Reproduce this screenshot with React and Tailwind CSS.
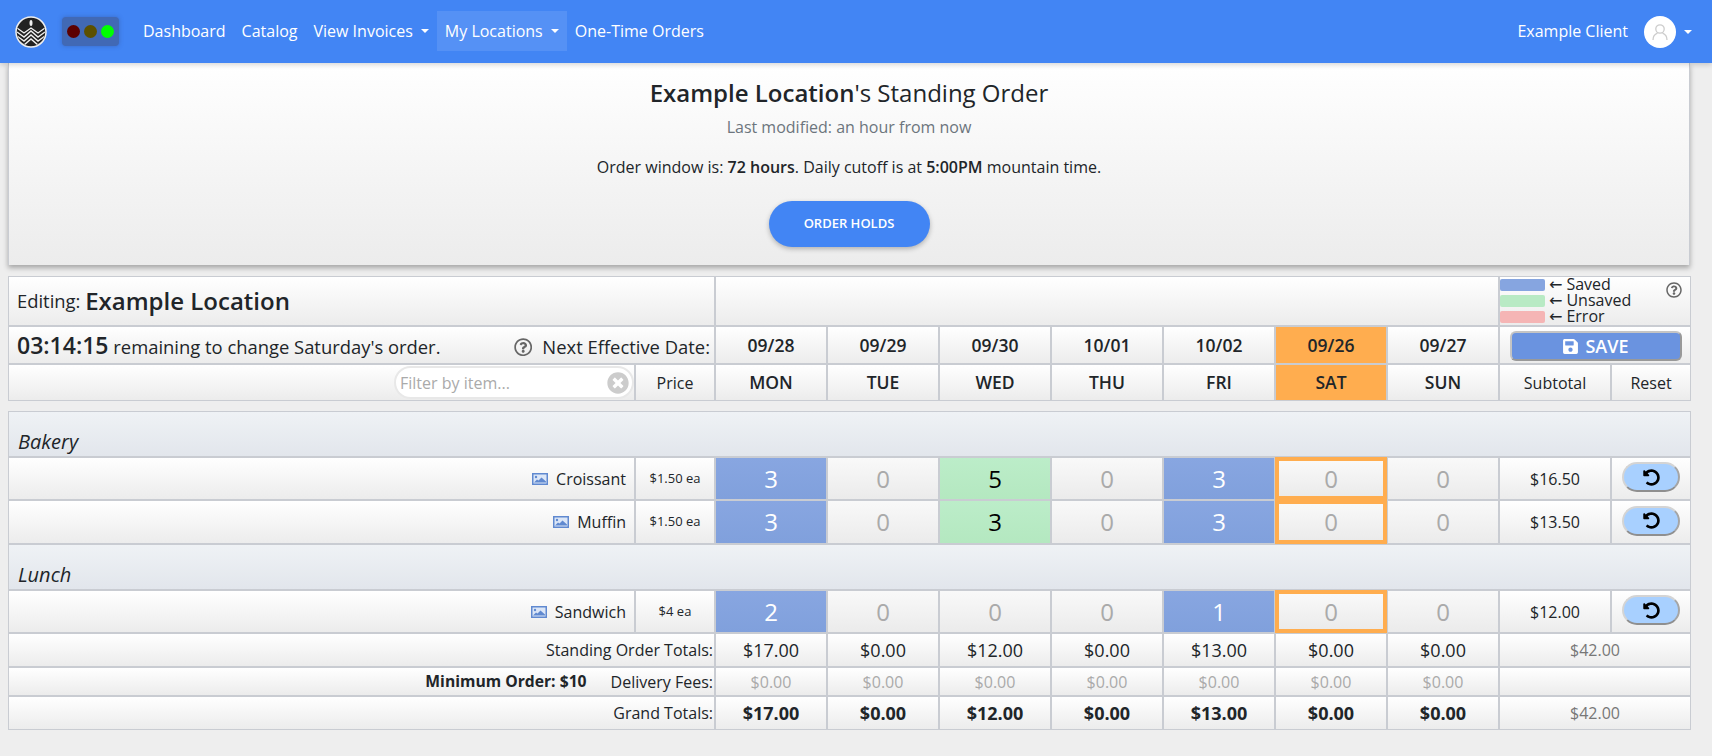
import React from 'react';
import { FaRegQuestionCircle, FaSave, FaTimesCircle, FaUndoAlt } from 'react-icons/fa';

const cols = 'grid-cols-[625px_78px_repeat(7,110px)_110px_78px]';
const cell = 'flex items-center justify-center bg-gradient-to-b from-white to-[#ececec]';

const dates = ['09/28', '09/29', '09/30', '10/01', '10/02', '09/26', '09/27'];
const days = ['MON', 'TUE', 'WED', 'THU', 'FRI', 'SAT', 'SUN'];

const Caret = () => (
  <span className="ml-[8px] inline-block h-0 w-0 border-x-[4px] border-t-[4px] border-x-transparent border-t-white"></span>
);

const Logo = () => (
  <svg width="32" height="32" viewBox="0 0 32 32">
    <clipPath id="logo-clip">
      <circle cx="16" cy="16" r="14" />
    </clipPath>
    <circle cx="16" cy="16" r="15" fill="#222222" stroke="#eeeeee" strokeWidth="1.5" />
    <ellipse cx="16" cy="7" rx="1.5" ry="3" fill="#eeeeee" />
    <g fill="none" stroke="#eeeeee" strokeWidth="1.4" clipPath="url(#logo-clip)">
      <path d="M2 12l7 5 7-5 7 5 7-5" />
      <path d="M2 16l7 5 7-6 7 6 7-5" />
      <path d="M2 20l7 5 7-6 7 6 7-5" />
      <path d="M2 24l7 5 7-6 7 6 7-5" />
    </g>
  </svg>
);

const UserIcon = () => (
  <svg width="18" height="18" viewBox="0 0 18 18" fill="none" stroke="#cccccc" strokeWidth="1.3">
    <circle cx="9" cy="6" r="4.2" />
    <path d="M2 17c0-4 2.5-6 4.5-6.8M16 17c0-4-2.5-6-4.5-6.8" />
  </svg>
);

const ImageIcon = () => (
  <svg width="16" height="12" viewBox="0 0 16 12" className="mr-[8px]">
    <rect x="0.75" y="0.75" width="14.5" height="10.5" fill="#dbe6f7" stroke="#6089d0" strokeWidth="1.5" />
    <circle cx="4" cy="4" r="1.2" fill="#6089d0" />
    <path d="M2 9.5l3-3 1.5 1 3-3 4.5 4v1z" fill="#6089d0" />
  </svg>
);

function QtyCell({ value, kind, selected }) {
  let tone = 'bg-gradient-to-b from-[#f9f9f9] to-[#ebebeb] text-[#aaaaaa]';
  if (kind === 'saved') tone = 'bg-gradient-to-b from-[#88a6e1] to-[#80a0dc] text-white';
  if (kind === 'unsaved') tone = 'bg-gradient-to-b from-[#bcedc9] to-[#b4e8c0] text-black';
  const mark = selected ? 'border-[3px] border-[#ffad4f] outline-1 outline-[#ffad4f] relative' : '';
  return (
    <div className={`flex items-center justify-center text-[24px] ${tone} ${mark}`}>{value}</div>
  );
}

function ItemRow({ name, price, qty, subtotal }) {
  return (
    <>
      <div className={`${cell} !justify-end pr-[8px] text-[16px]`}>
        <ImageIcon />
        {name}
      </div>
      <div className={`${cell} text-[13px]`}>{price}</div>
      {qty.map((q, i) => (
        <QtyCell
          key={i}
          value={q}
          selected={i === 5}
          kind={q === 0 ? 'empty' : i === 2 ? 'unsaved' : 'saved'}
        />
      ))}
      <div className={`${cell} text-[16px]`}>{subtotal}</div>
      <div className={cell}>
        <button className="mb-[3px] flex h-[30px] w-[58px] items-center justify-center rounded-full border-2 border-[#d4d4d4] border-b-[#8f8f8f] border-r-[#a5a5a5] bg-[#a8d0ff] text-[17px] text-black">
          <FaUndoAlt />
        </button>
      </div>
    </>
  );
}

function TotalsRow({ label, values, total, extra, valueClass, totalValue = true }) {
  return (
    <>
      <div className={`${cell} col-span-2 !justify-end pr-[1px] text-[16px]`}>
        {extra && <b className="mr-[24px] text-[15.7px] font-bold">{extra}</b>}
        {label}
      </div>
      {values.map((v, i) => (
        <div key={i} className={`${cell} ${valueClass}`}>{v}</div>
      ))}
      <div className={`${cell} col-span-2 text-[16px] text-[#777777]`}>{totalValue ? total : ''}</div>
    </>
  );
}

export default function App() {
  return (
    <div className="min-h-screen bg-[#eeeeee] text-[#212529] [font-family:'Open_Sans',sans-serif]">
      <nav className="relative z-10 flex h-[63px] items-center bg-[#4285f4] text-[16px] text-white shadow-[0_2px_5px_rgba(0,0,0,0.16)]">
        <div className="ml-[15px]"><Logo /></div>
        <div className="ml-[15px] flex h-[29px] w-[57px] items-center justify-center gap-[4px] rounded-[4px] bg-[#4169b5] shadow-[0_0_4px_rgba(50,80,150,0.5)]">
          <span className="h-[13px] w-[13px] rounded-full bg-[#5c0000]"></span>
          <span className="h-[13px] w-[13px] rounded-full bg-[#5c5000]"></span>
          <span className="h-[13px] w-[13px] rounded-full bg-[#00ff00]"></span>
        </div>
        <div className="mb-[1px] ml-[16px] flex items-center">
          <a className="flex h-[40px] items-center px-[8px]">Dashboard</a>
          <a className="flex h-[40px] items-center px-[8px]">Catalog</a>
          <a className="flex h-[40px] items-center px-[8px]">View Invoices<Caret /></a>
          <a className="flex h-[40px] items-center bg-white/10 px-[8px]">My Locations<Caret /></a>
          <a className="flex h-[40px] items-center px-[8px]">One-Time Orders</a>
        </div>
        <div className="ml-auto mr-[20px] flex items-center">
          <span className="mb-[1px]">Example Client</span>
          <span className="ml-[16px] flex h-[32px] w-[32px] items-center justify-center rounded-full bg-white">
            <UserIcon />
          </span>
          <Caret />
        </div>
      </nav>

      <section className="mx-[8px] flex h-[202px] w-[1682px] flex-col items-center border-x border-[#c9ccd2] bg-gradient-to-b from-white to-[#ececec] shadow-[0_3px_5px_rgba(0,0,0,0.3)]">
        <h1 className="mt-[12px] text-[24px] leading-[36px]">
          <span className="font-semibold">Example Location</span>'s Standing Order
        </h1>
        <p className="mt-[4px] text-[16px] leading-[24px] text-[#6c757d]">Last modified: an hour from now</p>
        <p className="mt-[16px] text-[16px] leading-[24px]">
          Order window is: <b className="font-semibold">72 hours</b>. Daily cutoff is at <b className="font-semibold">5:00PM</b> mountain time.
        </p>
        <button className="mt-[22px] h-[46px] w-[161px] rounded-full bg-[#4285f4] text-[13px] font-semibold text-white shadow-[0_2px_5px_rgba(0,0,0,0.26)]">
          ORDER HOLDS
        </button>
      </section>

      <div className={`ml-[8px] mt-[11px] grid w-[1683px] ${cols} grid-rows-[48px_36px_35px] gap-[2px] border border-[#c9ccd2] bg-[#c9ccd2]`}>
        <div className={`${cell} col-span-2 !justify-start pl-[8px] text-[18.4px]`}>
          <span>Editing:&nbsp;</span>
          <span className="text-[24px] font-semibold">Example Location</span>
        </div>
        <div className={`${cell} col-span-7`}></div>
        <div className={`${cell} col-span-2 !items-start !justify-start`}>
          <div className="flex flex-col text-[16px] leading-[16px]">
            {[['bg-[#86a5e0]', 'Saved'], ['bg-[#b8eac4]', 'Unsaved'], ['bg-[#f5b5b5]', 'Error']].map(([bg, label]) => (
              <div key={label} className="flex h-[16px] items-center">
                <span className={`mr-[4px] h-[12px] w-[45px] rounded-[2px] ${bg}`}></span>
                <span className="mb-[1px] [font-family:'DejaVu_Sans',sans-serif]">←</span>
                <span className="mb-[2px] ml-[4px]">{label}</span>
              </div>
            ))}
          </div>
          <FaRegQuestionCircle className="ml-auto mr-[8px] mt-[5px] text-[16px] text-[#666666]" />
        </div>

        <div className={`${cell} col-span-2 !justify-between pl-[8px] pr-[4px]`}>
          <span className="text-[18.4px]">
            <b className="text-[23px] font-semibold">03:14:15</b> remaining to change Saturday's order.
          </span>
          <span className="mt-[4px] flex items-center text-[18.4px]">
            <FaRegQuestionCircle className="mr-[10px] text-[#666666]" />
            Next Effective Date:
          </span>
        </div>
        {dates.map((d, i) => (
          <div key={d} className={`${i === 5 ? 'flex items-center justify-center bg-[#ffad4f]' : cell} text-[17.5px] font-semibold`}>{d}</div>
        ))}
        <div className={`${cell} col-span-2`}>
          <button className="ml-[1px] mt-[2px] flex h-[30px] w-[172px] items-center justify-center gap-[6px] rounded-[6px] border-2 border-[#c4c4c4] border-b-[#999999] border-r-[#999999] bg-[#6a93e0] text-[18px] font-semibold text-white">
            <FaSave className="text-[17px]" />
            SAVE
          </button>
        </div>

        <div className={`${cell} !justify-end`}>
          <div className="flex h-[33px] w-[240px] items-center rounded-full border-2 border-[#e8e8e8] bg-white pl-[4px] pr-[3px] text-[16px] text-[#aaaaaa]">
            Filter by item...
            <FaTimesCircle className="ml-auto text-[22px] text-[#cccccc]" />
          </div>
        </div>
        <div className={`${cell} text-[16px]`}>Price</div>
        {days.map((d, i) => (
          <div key={d} className={`${i === 5 ? 'flex items-center justify-center bg-[#ffad4f]' : cell} text-[17.5px] font-semibold`}>{d}</div>
        ))}
        <div className={`${cell} text-[16px]`}>Subtotal</div>
        <div className={`${cell} text-[16px]`}>Reset</div>
      </div>

      <div className={`ml-[8px] mt-[10px] grid w-[1683px] ${cols} grid-rows-[44px_41px_42px_44px_41px_32px_27px_32px] gap-[2px] border border-[#c9ccd2] bg-[#c9ccd2]`}>
        <div className="col-span-full flex items-end bg-gradient-to-b from-[#eff2f5] to-[#e2e6ec] pl-[9px] text-[20px] leading-[28px] italic">Bakery</div>
        <ItemRow name="Croissant" price="$1.50 ea" qty={[3, 0, 5, 0, 3, 0, 0]} subtotal="$16.50" />
        <ItemRow name="Muffin" price="$1.50 ea" qty={[3, 0, 3, 0, 3, 0, 0]} subtotal="$13.50" />
        <div className="col-span-full flex items-end bg-gradient-to-b from-[#eff2f5] to-[#e2e6ec] pl-[9px] text-[20px] leading-[28px] italic">Lunch</div>
        <ItemRow name="Sandwich" price="$4 ea" qty={[2, 0, 0, 0, 1, 0, 0]} subtotal="$12.00" />
        <TotalsRow
          label="Standing Order Totals:"
          values={['$17.00', '$0.00', '$12.00', '$0.00', '$13.00', '$0.00', '$0.00']}
          total="$42.00"
          valueClass="text-[18px]"
        />
        <TotalsRow
          label="Delivery Fees:"
          extra="Minimum Order: $10"
          values={['$0.00', '$0.00', '$0.00', '$0.00', '$0.00', '$0.00', '$0.00']}
          valueClass="text-[16px] text-[#aaaaaa]"
          totalValue={false}
        />
        <TotalsRow
          label="Grand Totals:"
          values={['$17.00', '$0.00', '$12.00', '$0.00', '$13.00', '$0.00', '$0.00']}
          total="$42.00"
          valueClass="text-[18px] font-bold"
        />
      </div>
    </div>
  );
}
